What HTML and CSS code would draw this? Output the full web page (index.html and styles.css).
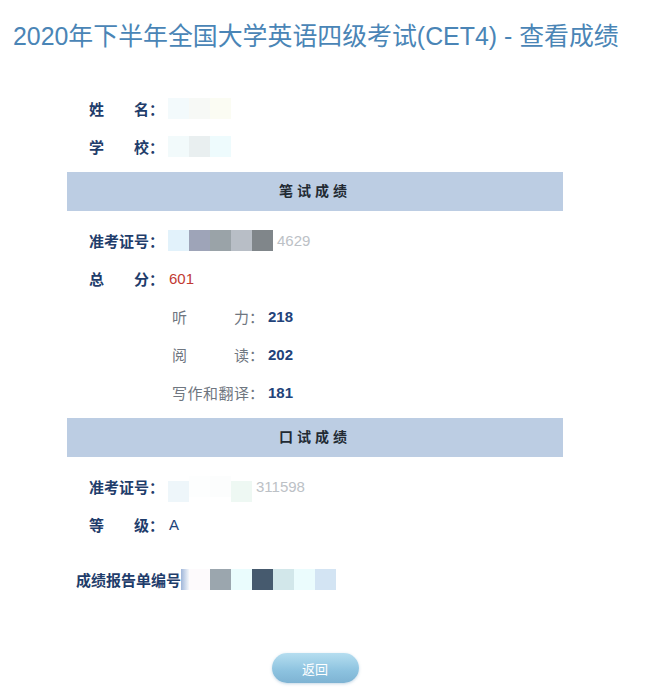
FILE: index.html
```html
<!DOCTYPE html>
<html lang="zh-CN">
<head>
    <meta charset="UTF-8">
    <meta name="viewport" content="width=device-width, initial-scale=1.0">
    <title>查看成绩</title>
    <link rel="stylesheet" href="styles.css">
</head>
<body>
    <h1 class="page-title">2020年下半年全国大学英语四级考试(CET4) - 查看成绩</h1>

    <div class="score-sheet">
        <div class="info-row">
            <span class="label">姓名</span><span class="colon">：</span>
            <span class="mask">
                <i style="background: #f3fafc;"></i><i style="background: #f7f9f6;"></i><i style="background: #fbfcf3;"></i>
            </span>
        </div>
        <div class="info-row">
            <span class="label">学校</span><span class="colon">：</span>
            <span class="mask">
                <i style="background: #f2fafb;"></i><i style="background: #e9eff0;"></i><i style="background: #eefbfd;"></i>
            </span>
        </div>

        <div class="section-bar">笔试成绩</div>

        <div class="info-row">
            <span class="label">准考证号</span><span class="colon">：</span>
            <span class="mask">
                <i style="background: #e2f2fb;"></i><i style="background: #9ea4b8;"></i><i style="background: #9aa3a8;"></i><i style="background: #b8bec6;"></i><i style="background: #80868a;"></i>
                <span class="mask-text">4629</span>
            </span>
        </div>
        <div class="info-row">
            <span class="label">总分</span><span class="colon">：</span>
            <span class="value total">601</span>
        </div>
        <div class="info-row sub-row">
            <span class="sub-label">听力</span><span class="colon">：</span>
            <span class="value">218</span>
        </div>
        <div class="info-row sub-row">
            <span class="sub-label">阅读</span><span class="colon">：</span>
            <span class="value">202</span>
        </div>
        <div class="info-row sub-row">
            <span class="sub-label">写作和翻译</span><span class="colon">：</span>
            <span class="value">181</span>
        </div>

        <div class="section-bar">口试成绩</div>

        <div class="info-row">
            <span class="label">准考证号</span><span class="colon">：</span>
            <span class="mask">
                <i class="low" style="background: #eef6fa;"></i><i style="background: #fdfefe;"></i><i style="background: #fcfdfd;"></i><i class="low" style="background: #eef8f3;"></i>
                <span class="mask-text">311598</span>
            </span>
        </div>
        <div class="info-row">
            <span class="label">等级</span><span class="colon">：</span>
            <span class="value grade">A</span>
        </div>

        <div class="info-row report-row">
            <span class="report-label">成绩报告单编号</span>
            <span class="mask">
                <i class="fade"></i><i style="background: #fdfafc;"></i><i style="background: #9ba6ae;"></i><i style="background: #eafcfd;"></i><i style="background: #465a6e;"></i><i style="background: #d2e7ea;"></i><i style="background: #ebfcfd;"></i><i style="background: #d3e4f3;"></i>
            </span>
        </div>

        <div class="actions">
            <button class="back-btn" type="button">返回</button>
        </div>
    </div>
</body>
</html>
```

FILE: styles.css
```css
* { margin: 0; padding: 0; box-sizing: border-box; }
body { font-family: "Liberation Sans", "Noto Sans CJK SC", sans-serif; background: #fff; color: #1f3d6b; width: 651px; height: 695px; overflow: hidden; }

.page-title { font-size: 24.9px; font-weight: 400; color: #4a85b6; line-height: 36px; padding: 18px 0 0 13px; white-space: nowrap; }

.score-sheet { margin: 35px 0 0 67px; width: 496px; }
.info-row { display: flex; align-items: center; height: 38px; padding-left: 22px; font-size: 15px; }
.label { display: inline-block; width: 60px; text-align: justify; text-align-last: justify; font-weight: 700; color: #1f3d6b; }
.colon { width: 15px; font-weight: 700; color: #1f3d6b; }
.value { margin-left: 5px; font-weight: 700; color: #22437a; font-size: 15px; }
.value.total { color: #c23a33; font-weight: 400; }
.value.grade { font-weight: 400; }

.sub-row { padding-left: 105px; }
.sub-row .sub-label { display: inline-block; width: 77px; text-align: justify; text-align-last: justify; color: #6f7680; }
.sub-row .colon { color: #6f7680; font-weight: 400; }
.sub-row .value { margin-left: 4px; }

.mask { display: flex; align-items: center; margin-left: 4px; }
.mask i { display: block; width: 21px; height: 21px; }
.mask i.low { margin-top: 10px; }
.mask-text { color: #bcc1c6; font-size: 15px; margin-left: 4px; }

.section-bar { height: 39px; line-height: 39px; margin: 7px 0 10px; background: #bccde3; text-align: center; font-size: 14px; font-weight: 700; color: #222a33; letter-spacing: 4px; }

.report-row { padding-left: 9px; margin-top: 17px; }
.report-label { font-weight: 700; color: #1f3d6b; }
.report-row .mask { margin-left: 0; }
.report-row .mask i.fade { width: 8px; background: linear-gradient(90deg, #9fb6d9, #f4f7fb); }

.actions { display: flex; justify-content: center; margin-top: 55px; }
.back-btn { width: 87px; height: 30px; border: none; border-radius: 15px; background: linear-gradient(180deg, #b6def0 0%, #8cc2df 60%, #7eb3d3 100%); color: #fff; font-family: "Noto Sans CJK SC", sans-serif; font-size: 13px; box-shadow: 0 1px 3px rgba(90, 140, 180, 0.35); }
```
